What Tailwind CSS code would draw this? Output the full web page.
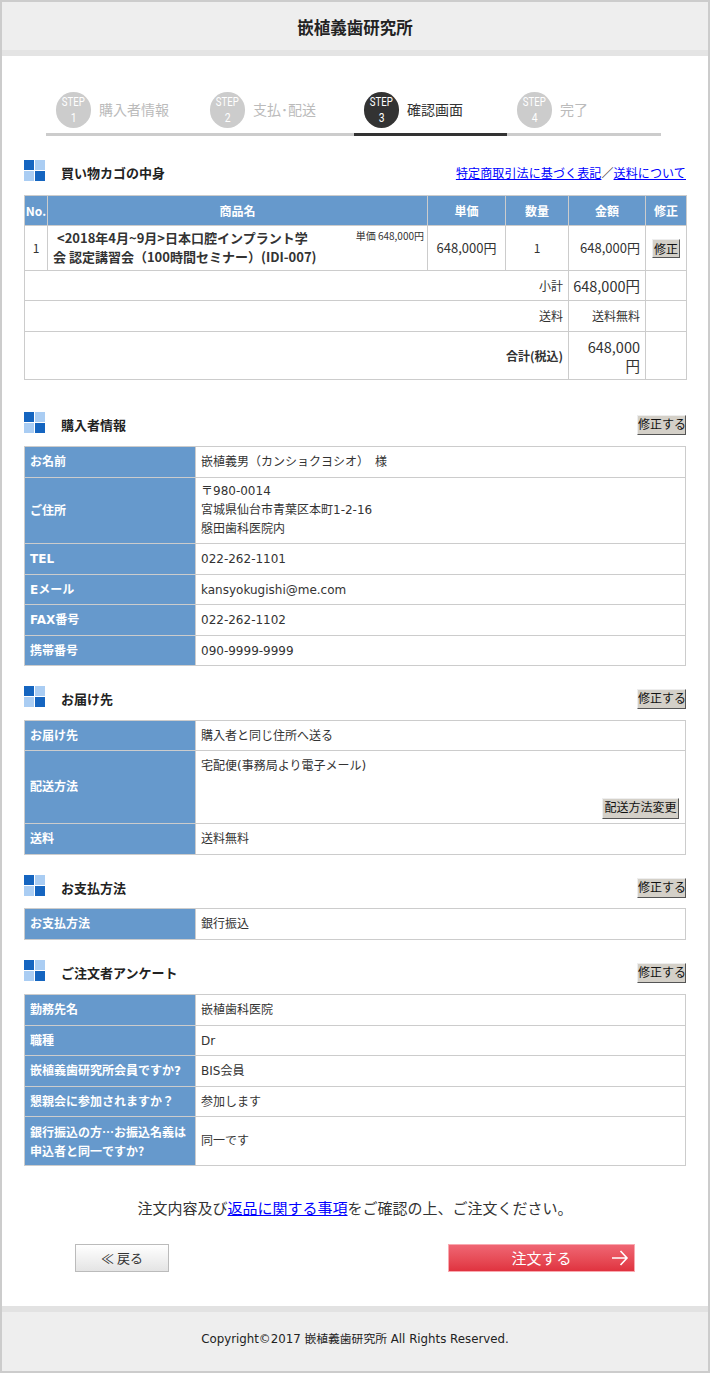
<!DOCTYPE html>
<html lang="ja">
<head>
  <meta charset="UTF-8" />
  <title>嵌植義歯研究所</title>
  <script src="https://cdn.jsdelivr.net/npm/@tailwindcss/browser@4"></script>
</head>
<body class="bg-white text-[#333] text-[12px] font-['DejaVu_Sans','Noto_Sans_CJK_JP',sans-serif]">
<div class="w-[710px] h-[1373px] flex flex-col border-x-2 border-[#ccc] overflow-hidden">

  <!-- header -->
  <header class="h-[56px] shrink-0 -mx-[2px] bg-[#eee] border-t-2 border-t-[#ccc] border-b-[6px] border-b-[#e4e4e4] flex items-center justify-center pt-[2px]">
    <h1 class="text-[16.5px] font-bold text-[#222] font-['Noto_Sans_CJK_JP',sans-serif]">嵌植義歯研究所</h1>
  </header>

  <main class="flex-1 px-[22px]">
    <!-- steps -->
    <ol class="mt-[36px] mx-[22px] w-[615px] h-[44px] flex border-b-[3px] border-[#ccc] font-['Noto_Sans_CJK_JP',sans-serif]">
      <li class="w-[154px] h-[44px] pl-[10px] flex gap-[8px] text-[#bbb]">
        <div class="w-[35px] h-[36px] rounded-full bg-[#ccc] text-white flex flex-col items-center justify-center leading-[15px] font-['Roboto',sans-serif]"><span class="text-[12px] scale-x-[.8]">STEP</span><span class="text-[13px] scale-x-[.8]">1</span></div>
        <span class="text-[14px] leading-[34px]">購入者情報</span>
      </li>
      <li class="w-[154px] h-[44px] pl-[10px] flex gap-[8px] text-[#bbb]">
        <div class="w-[35px] h-[36px] rounded-full bg-[#ccc] text-white flex flex-col items-center justify-center leading-[15px] font-['Roboto',sans-serif]"><span class="text-[12px] scale-x-[.8]">STEP</span><span class="text-[13px] scale-x-[.8]">2</span></div>
        <span class="text-[14px] leading-[34px]">支払･配送</span>
      </li>
      <li class="w-[153px] h-[44px] pl-[10px] flex gap-[8px] text-[#333] border-b-[3px] border-[#333]">
        <div class="w-[35px] h-[36px] rounded-full bg-[#333] text-white flex flex-col items-center justify-center leading-[15px] font-['Roboto',sans-serif]"><span class="text-[12px] scale-x-[.8]">STEP</span><span class="text-[13px] scale-x-[.8]">3</span></div>
        <span class="text-[14px] leading-[34px]">確認画面</span>
      </li>
      <li class="w-[154px] h-[44px] pl-[10px] flex gap-[8px] text-[#bbb]">
        <div class="w-[35px] h-[36px] rounded-full bg-[#ccc] text-white flex flex-col items-center justify-center leading-[15px] font-['Roboto',sans-serif]"><span class="text-[12px] scale-x-[.8]">STEP</span><span class="text-[13px] scale-x-[.8]">4</span></div>
        <span class="text-[14px] leading-[34px]">完了</span>
      </li>
    </ol>

    <!-- cart -->
    <div class="mt-[24px] h-[35px] flex justify-between items-start">
      <div class="flex">
        <svg width="21" height="21" viewBox="0 0 21 21"><rect width="10" height="10" fill="#1565c0"/><rect x="11" width="10" height="10" fill="#aacdf3"/><rect y="11" width="10" height="10" fill="#aacdf3"/><rect x="11" y="11" width="10" height="10" fill="#1565c0"/></svg>
        <h2 class="ml-[16px] mt-[6px] text-[13px] leading-[16px] font-bold text-[#222]">買い物カゴの中身</h2>
      </div>
      <p class="mt-[6px] leading-[16px] tracking-[0.13px]"><a href="#" class="text-[#00f] underline">特定商取引法に基づく表記</a>／<a href="#" class="text-[#00f] underline">送料について</a></p>
    </div>
    <table class="w-[662px] table-fixed border-collapse font-['Noto_Sans_CJK_JP',sans-serif]">
      <colgroup><col class="w-[23px]"/><col class="w-[380px]"/><col class="w-[78px]"/><col class="w-[63px]"/><col class="w-[77px]"/><col class="w-[41px]"/></colgroup>
      <tr class="h-[30px] bg-[#69c] text-white font-bold text-center">
        <th class="border border-[#ccc]">No.</th><th class="border border-[#ccc]">商品名</th><th class="border border-[#ccc]">単価</th><th class="border border-[#ccc]">数量</th><th class="border border-[#ccc]">金額</th><th class="border border-[#ccc]">修正</th>
      </tr>
      <tr class="h-[45px]">
        <td class="border border-[#ccc] text-center">1</td>
        <td class="border border-[#ccc] pl-[5px] pr-[3px] align-top">
          <div class="flex justify-between">
            <p class="mt-[2px] text-[13px] leading-[19px] font-bold whitespace-nowrap"><span class="ml-[4px]">&lt;2018年4月~9月&gt;</span>日本口腔インプラント学<br/>会 認定講習会（100時間セミナー）(IDI-007)</p>
            <span class="text-[10px] leading-[20px] whitespace-nowrap">単価 648,000円</span>
          </div>
        </td>
        <td class="border border-[#ccc] text-center text-[13px]">648,000円</td>
        <td class="border border-[#ccc] text-center">1</td>
        <td class="border border-[#ccc] text-right pr-[5px] text-[13px]">648,000円</td>
        <td class="border border-[#ccc] text-center"><button class="w-[28px] h-[19px] bg-[#d4d0c8] border border-[#eee] border-r-[#555] border-b-[#555] text-[#111] text-[12px] leading-[15px]">修正</button></td>
      </tr>
      <tr class="h-[30px]"><td colspan="4" class="border border-[#ccc] text-right pr-[5px]">小計</td><td class="border border-[#ccc] text-right pr-[5px] text-[14.5px] whitespace-nowrap">648,000円</td><td class="border border-[#ccc]"></td></tr>
      <tr class="h-[31px]"><td colspan="4" class="border border-[#ccc] text-right pr-[5px]">送料</td><td class="border border-[#ccc] text-right pr-[5px]">送料無料</td><td class="border border-[#ccc]"></td></tr>
      <tr class="h-[48px]"><td colspan="4" class="border border-[#ccc] text-right pr-[5px] font-bold">合計(税込)</td><td class="border border-[#ccc] text-right pr-[5px] text-[14.5px] leading-[19px]">648,000<br/>円</td><td class="border border-[#ccc]"></td></tr>
    </table>

    <!-- buyer -->
    <div class="mt-[32px] h-[34px] flex justify-between items-start">
      <div class="flex">
        <svg width="21" height="21" viewBox="0 0 21 21"><rect width="10" height="10" fill="#1565c0"/><rect x="11" width="10" height="10" fill="#aacdf3"/><rect y="11" width="10" height="10" fill="#aacdf3"/><rect x="11" y="11" width="10" height="10" fill="#1565c0"/></svg>
        <h2 class="ml-[16px] mt-[6px] text-[13px] leading-[16px] font-bold text-[#222]">購入者情報</h2>
      </div>
      <button class="mt-[3px] w-[49px] h-[20px] bg-[#d4d0c8] border border-[#eee] border-r-[#555] border-b-[#555] text-[#111] text-[12px] leading-[16px] whitespace-nowrap">修正する</button>
    </div>
    <table class="w-[662px] table-fixed border-collapse">
      <colgroup><col class="w-[171px]"/><col/></colgroup>
      <tr class="h-[31px]"><th class="bg-[#69c] text-white text-left font-bold pl-[5px] border border-[#ccc]">お名前</th><td class="pl-[5px] border border-[#ccc]">嵌植義男（カンショクヨシオ）　様</td></tr>
      <tr class="h-[66px]"><th class="bg-[#69c] text-white text-left font-bold pl-[5px] border border-[#ccc]">ご住所</th><td class="pl-[5px] border border-[#ccc] leading-[19px]">〒980-0014<br/>宮城県仙台市青葉区本町1-2-16<br/>慇田歯科医院内</td></tr>
      <tr class="h-[31px]"><th class="bg-[#69c] text-white text-left font-bold pl-[5px] border border-[#ccc]">TEL</th><td class="pl-[5px] border border-[#ccc]">022-262-1101</td></tr>
      <tr class="h-[30px]"><th class="bg-[#69c] text-white text-left font-bold pl-[5px] border border-[#ccc]">Eメール</th><td class="pl-[5px] border border-[#ccc]">kansyokugishi@me.com</td></tr>
      <tr class="h-[31px]"><th class="bg-[#69c] text-white text-left font-bold pl-[5px] border border-[#ccc]">FAX番号</th><td class="pl-[5px] border border-[#ccc]">022-262-1102</td></tr>
      <tr class="h-[30px]"><th class="bg-[#69c] text-white text-left font-bold pl-[5px] border border-[#ccc]">携帯番号</th><td class="pl-[5px] border border-[#ccc]">090-9999-9999</td></tr>
    </table>

    <!-- delivery -->
    <div class="mt-[20px] h-[34px] flex justify-between items-start">
      <div class="flex">
        <svg width="21" height="21" viewBox="0 0 21 21"><rect width="10" height="10" fill="#1565c0"/><rect x="11" width="10" height="10" fill="#aacdf3"/><rect y="11" width="10" height="10" fill="#aacdf3"/><rect x="11" y="11" width="10" height="10" fill="#1565c0"/></svg>
        <h2 class="ml-[16px] mt-[6px] text-[13px] leading-[16px] font-bold text-[#222]">お届け先</h2>
      </div>
      <button class="mt-[3px] w-[49px] h-[20px] bg-[#d4d0c8] border border-[#eee] border-r-[#555] border-b-[#555] text-[#111] text-[12px] leading-[16px] whitespace-nowrap">修正する</button>
    </div>
    <table class="w-[662px] table-fixed border-collapse">
      <colgroup><col class="w-[171px]"/><col/></colgroup>
      <tr class="h-[30px]"><th class="bg-[#69c] text-white text-left font-bold pl-[5px] border border-[#ccc]">お届け先</th><td class="pl-[5px] border border-[#ccc]">購入者と同じ住所へ送る</td></tr>
      <tr class="h-[73px]"><th class="bg-[#69c] text-white text-left font-bold pl-[5px] border border-[#ccc]">配送方法</th>
        <td class="pl-[5px] pr-[6px] border border-[#ccc] align-top">
          <div class="h-[72px] flex flex-col justify-between pt-[6px] pb-[4px]">
            <span>宅配便(事務局より電子メール)</span>
            <button class="self-end w-[77px] h-[21px] bg-[#d4d0c8] border border-[#eee] border-r-[#555] border-b-[#555] text-[#111] text-[12px] leading-[17px] whitespace-nowrap">配送方法変更</button>
          </div>
        </td></tr>
      <tr class="h-[31px]"><th class="bg-[#69c] text-white text-left font-bold pl-[5px] border border-[#ccc]">送料</th><td class="pl-[5px] border border-[#ccc]">送料無料</td></tr>
    </table>

    <!-- payment -->
    <div class="mt-[20px] h-[33px] flex justify-between items-start">
      <div class="flex">
        <svg width="21" height="21" viewBox="0 0 21 21"><rect width="10" height="10" fill="#1565c0"/><rect x="11" width="10" height="10" fill="#aacdf3"/><rect y="11" width="10" height="10" fill="#aacdf3"/><rect x="11" y="11" width="10" height="10" fill="#1565c0"/></svg>
        <h2 class="ml-[16px] mt-[6px] text-[13px] leading-[16px] font-bold text-[#222]">お支払方法</h2>
      </div>
      <button class="mt-[3px] w-[49px] h-[20px] bg-[#d4d0c8] border border-[#eee] border-r-[#555] border-b-[#555] text-[#111] text-[12px] leading-[16px] whitespace-nowrap">修正する</button>
    </div>
    <table class="w-[662px] table-fixed border-collapse">
      <colgroup><col class="w-[171px]"/><col/></colgroup>
      <tr class="h-[31px]"><th class="bg-[#69c] text-white text-left font-bold pl-[5px] border border-[#ccc]">お支払方法</th><td class="pl-[5px] border border-[#ccc]">銀行振込</td></tr>
    </table>

    <!-- survey -->
    <div class="mt-[20px] h-[34px] flex justify-between items-start">
      <div class="flex">
        <svg width="21" height="21" viewBox="0 0 21 21"><rect width="10" height="10" fill="#1565c0"/><rect x="11" width="10" height="10" fill="#aacdf3"/><rect y="11" width="10" height="10" fill="#aacdf3"/><rect x="11" y="11" width="10" height="10" fill="#1565c0"/></svg>
        <h2 class="ml-[16px] mt-[6px] text-[13px] leading-[16px] font-bold text-[#222]">ご注文者アンケート</h2>
      </div>
      <button class="mt-[3px] w-[49px] h-[20px] bg-[#d4d0c8] border border-[#eee] border-r-[#555] border-b-[#555] text-[#111] text-[12px] leading-[16px] whitespace-nowrap">修正する</button>
    </div>
    <table class="w-[662px] table-fixed border-collapse">
      <colgroup><col class="w-[171px]"/><col/></colgroup>
      <tr class="h-[31px]"><th class="bg-[#69c] text-white text-left font-bold pl-[5px] border border-[#ccc]">勤務先名</th><td class="pl-[5px] border border-[#ccc]">嵌植歯科医院</td></tr>
      <tr class="h-[30px]"><th class="bg-[#69c] text-white text-left font-bold pl-[5px] border border-[#ccc]">職種</th><td class="pl-[5px] border border-[#ccc]">Dr</td></tr>
      <tr class="h-[31px]"><th class="bg-[#69c] text-white text-left font-bold pl-[5px] border border-[#ccc]">嵌植義歯研究所会員ですか?</th><td class="pl-[5px] border border-[#ccc]">BIS会員</td></tr>
      <tr class="h-[30px]"><th class="bg-[#69c] text-white text-left font-bold pl-[5px] border border-[#ccc]">懇親会に参加されますか？</th><td class="pl-[5px] border border-[#ccc]">参加します</td></tr>
      <tr class="h-[49px]"><th class="bg-[#69c] text-white text-left font-bold pl-[5px] border border-[#ccc] leading-[19px] font-['Noto_Sans_CJK_JP',sans-serif]">銀行振込の方…お振込名義は申込者と同一ですか?</th><td class="pl-[5px] border border-[#ccc]">同一です</td></tr>
    </table>

    <p class="mt-[31px] text-center text-[15px] leading-[22px] font-['Noto_Sans_CJK_JP',sans-serif]">注文内容及び<a href="#" class="text-[#00f] underline">返品に関する事項</a>をご確認の上、ご注文ください。</p>

    <div class="mt-[25px] pl-[51px] flex">
      <button class="w-[94px] h-[28px] bg-gradient-to-b from-white to-[#e4e4e4] border border-[#bbb] text-[13px] text-[#333] font-['Noto_Sans_CJK_JP',sans-serif]">≪ 戻る</button>
      <button class="relative ml-[279px] w-[187px] h-[28px] bg-gradient-to-b from-[#ef6573] to-[#e0323f] border border-[#f9a9b0] text-white text-[15px] font-['Noto_Sans_CJK_JP',sans-serif]">
        注文する
        <svg class="absolute right-[5px] top-[4px]" width="18" height="18" viewBox="0 0 18 18" fill="none" stroke="#fff" stroke-width="1.6"><path d="M1 9h15M9.5 2l6.5 7-6.5 7"/></svg>
      </button>
    </div>
  </main>

  <!-- footer -->
  <footer class="h-[67px] shrink-0 -mx-[2px] bg-[#eee] border-t-[6px] border-t-[#e2e2e2] border-b-2 border-b-[#ccc] flex items-center justify-center text-[11.8px] text-[#222] pb-[4px]">
    Copyright©2017 嵌植義歯研究所 All Rights Reserved.
  </footer>
</div>
</body>
</html>
